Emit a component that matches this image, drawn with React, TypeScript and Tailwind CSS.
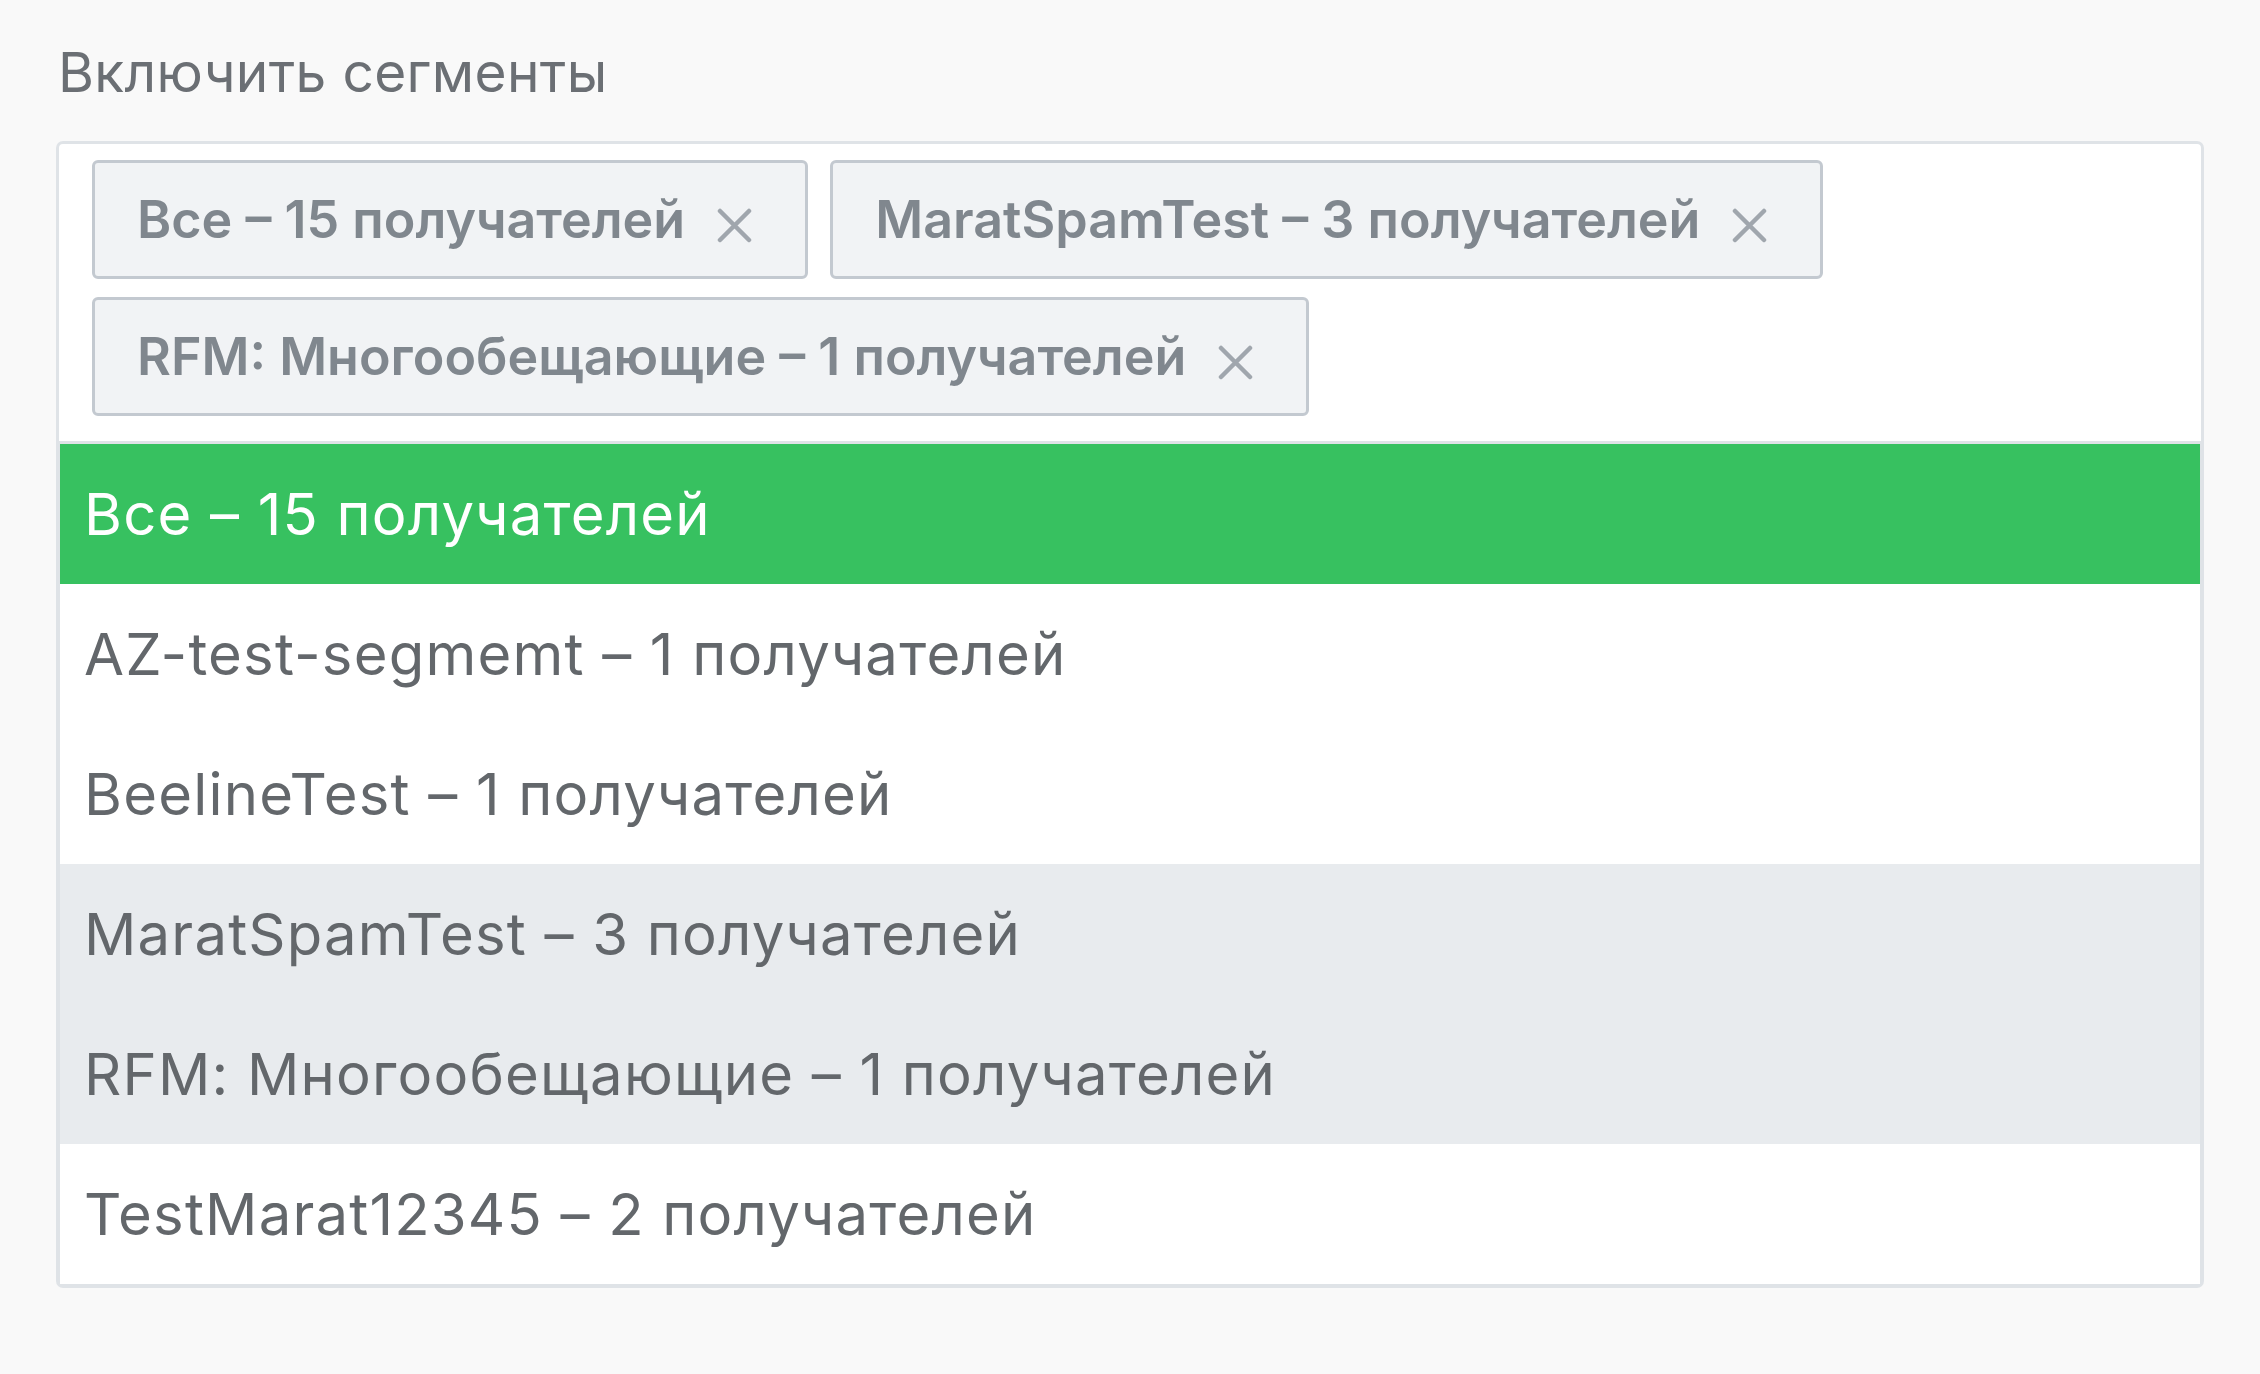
import React from "react";

const tags = [
  "Все – 15 получателей",
  "MaratSpamTest – 3 получателей",
  "RFM: Многообещающие – 1 получателей",
];

const options = [
  { label: "Все – 15 получателей", state: "active" },
  { label: "AZ-test-segmemt – 1 получателей", state: "none" },
  { label: "BeelineTest – 1 получателей", state: "none" },
  { label: "MaratSpamTest – 3 получателей", state: "selected" },
  { label: "RFM: Многообещающие – 1 получателей", state: "selected" },
  { label: "TestMarat12345 – 2 получателей", state: "none" },
];

function XIcon() {
  return (
    <svg width="35" height="35" viewBox="0 0 35 35" className="mt-[12px] shrink-0">
      <path d="M3 3 L32 32 M32 3 L3 32" stroke="#a0a6ad" strokeWidth="4.5" strokeLinecap="round" />
    </svg>
  );
}

export default function App() {
  return (
    <div
      className="min-h-screen bg-[#f9f9f9] px-[56px] pt-[40px]"
      style={{ fontFamily: "Inter, 'Noto Sans', sans-serif" }}
    >
      <div className="text-[55px] leading-[64px] text-[#6b6f74] pl-[2px] tracking-[0.35px]">
        Включить сегменты
      </div>
      <div className="mt-[37px] rounded-t-[7px] border-[3px] border-[#dfe3e7] bg-white pl-[33px] pr-[33px] pt-[16px] pb-[25px]">
        <div className="flex flex-wrap gap-x-[22px] gap-y-[18px]">
          {tags.map((t) => (
            <div
              key={t}
              className="flex h-[119px] items-center gap-[32px] rounded-[6px] border-[3px] border-[#c3c9d0] bg-[#f1f3f5] pl-[42px] pr-[53px]"
            >
              <span className="text-[52px] font-semibold text-[#80878e] whitespace-nowrap">
                {t}
              </span>
              <XIcon />
            </div>
          ))}
        </div>
      </div>
      <div className="rounded-b-[7px] border-x-[4px] border-b-[4px] border-[#dfe3e7] bg-white">
        {options.map((o) => (
          <div
            key={o.label}
            className={
              "flex h-[140px] items-center pl-[24px] text-[58px] tracking-[1.2px] whitespace-nowrap " +
              (o.state === "active"
                ? "bg-[#37c160] text-white"
                : o.state === "selected"
                ? "bg-[#e8ebee] text-[#63676b]"
                : "bg-white text-[#63676b]")
            }
          >
            {o.label}
          </div>
        ))}
      </div>
    </div>
  );
}
